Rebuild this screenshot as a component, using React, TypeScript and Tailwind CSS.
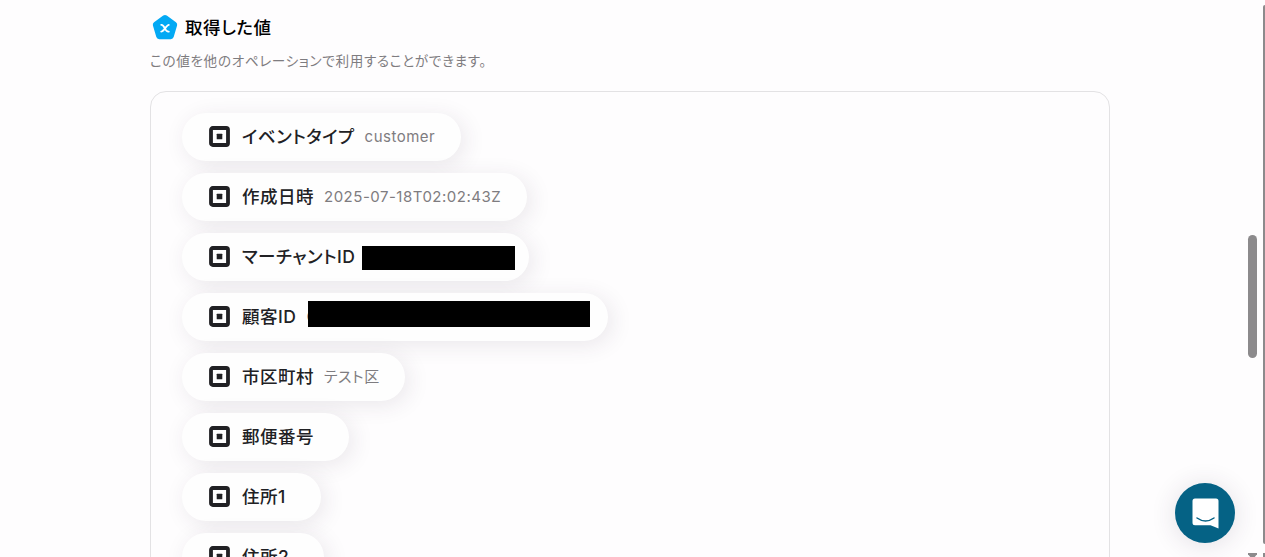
import React from "react";

const fields = [
  { label: "イベントタイプ", value: "customer", pill: "w-[279px]" },
  { label: "作成日時", value: "2025-07-18T02:02:43Z", pill: "w-[345px]" },
  { label: "マーチャントID", mask: "w-[153px] h-6 left-[180px] top-[13px]", pill: "w-[347px]" },
  { label: "顧客ID", value: "C", mask: "w-[282px] h-[26px] left-[126px] top-2", pill: "w-[426px]" },
  { label: "市区町村", value: "テスト区", pill: "w-[223px]" },
  { label: "郵便番号", pill: "w-[167px]" },
  { label: "住所1", pill: "w-[139px]" },
  { label: "住所2", pill: "w-[142px]" },
];

const PentagonIcon = () => (
  <svg className="w-[26px] h-[26px] shrink-0" viewBox="0 0 26 26">
    <path
      d="M13 4 L22.2 10.7 L18.8 22.2 H7.2 L3.8 10.7 Z"
      fill="#03a9f4"
      stroke="#03a9f4"
      strokeWidth="6"
      strokeLinejoin="round"
    />
    <path
      d="M9.2 10.9 C12.8 10 12.6 18.5 16.8 17.6 M16.8 10.8 C14.4 11 11.8 17.6 9.2 17.6"
      fill="none"
      stroke="#fff"
      strokeWidth="1.8"
      strokeLinecap="round"
    />
  </svg>
);

const SquareIcon = () => (
  <svg className="w-[21px] h-[21px] mb-[1px] shrink-0" viewBox="0 0 21 21">
    <rect x="2" y="2" width="17" height="17" rx="1.8" fill="none" stroke="#212124" strokeWidth="3.8" />
    <rect x="7.7" y="7.7" width="5.6" height="5.6" rx="0.5" fill="#212124" />
  </svg>
);

const ChatIcon = () => (
  <svg className="w-[27px] h-[31px]" viewBox="0 0 27 31">
    <path
      d="M3 0.5 H24 Q26.5 0.5 26.5 3 V30.5 Q22 28.8 18.5 27.3 H3 Q0.5 27.3 0.5 24.8 V3 Q0.5 0.5 3 0.5 Z"
      fill="#fff"
    />
    <path d="M5 20 Q13.5 26 22 20" fill="none" stroke="#056285" strokeWidth="1.5" strokeLinecap="round" />
  </svg>
);

export default function App() {
  return (
    <div className="relative h-[557px] w-[1265px] overflow-hidden bg-[#fefdfe] font-['Inter','Noto_Sans_CJK_JP',sans-serif] [font-feature-settings:'palt']">
      <main className="ml-[150px] w-[960px] pt-[14px]">
        <header className="flex h-[26px] items-center gap-[7px] pl-[2px]">
          <PentagonIcon />
          <h1 className="pt-[2px] text-[17.5px] leading-[26px] font-medium tracking-[0.5px] text-black">取得した値</h1>
        </header>
        <p className="mt-[11px] h-5 text-[13.6px] leading-5 tracking-[0.65px] whitespace-nowrap text-[#7e7c80]">
          この値を他のオペレーションで利用することができます。
        </p>
        <section className="mt-5 h-[600px] rounded-2xl border border-[#e3e2e4] pt-[21px] pl-[31px]">
          <ul className="flex flex-col items-start gap-3">
            {fields.map((field) => (
              <li
                key={field.label}
                className={`relative flex h-12 items-center rounded-full bg-[#fefefe] pl-[27px] whitespace-nowrap shadow-[4px_4px_22px_rgba(60,40,70,0.1)] ${field.pill}`}
              >
                <SquareIcon />
                <span className="ml-3 text-[17.5px] leading-6 font-medium tracking-[0.5px] text-[#212124]">
                  {field.label}
                </span>
                {field.value && (
                  <span className="ml-[10px] text-[15px] leading-6 tracking-[0.5px] text-[#7e7c80]">{field.value}</span>
                )}
                {field.mask && <span className={`absolute bg-black ${field.mask}`} />}
              </li>
            ))}
          </ul>
        </section>
      </main>

      <div className="absolute top-[235px] left-[1248px] h-[123px] w-[9px] rounded-full bg-[#8c8a8c]" />
      <div className="absolute top-[5px] left-[1263px] h-[539px] w-[2px] rounded-l-full bg-[#8c8a8c]" />
      <div className="absolute top-[553px] left-[1248px] h-1 w-[9px] bg-[#8c8a8c] [clip-path:polygon(0_0,100%_0,100%_30%,75%_100%,25%_100%,0_30%)]" />
      <div className="absolute top-[553px] left-[1263px] h-1 w-[2px] bg-[#8c8a8c]" />
      <button className="absolute top-[483px] left-[1175px] flex h-[60px] w-[60px] items-center justify-center rounded-full bg-[#056285] shadow-[0_2px_26px_rgba(60,40,70,0.14)]">
        <ChatIcon />
      </button>
    </div>
  );
}
